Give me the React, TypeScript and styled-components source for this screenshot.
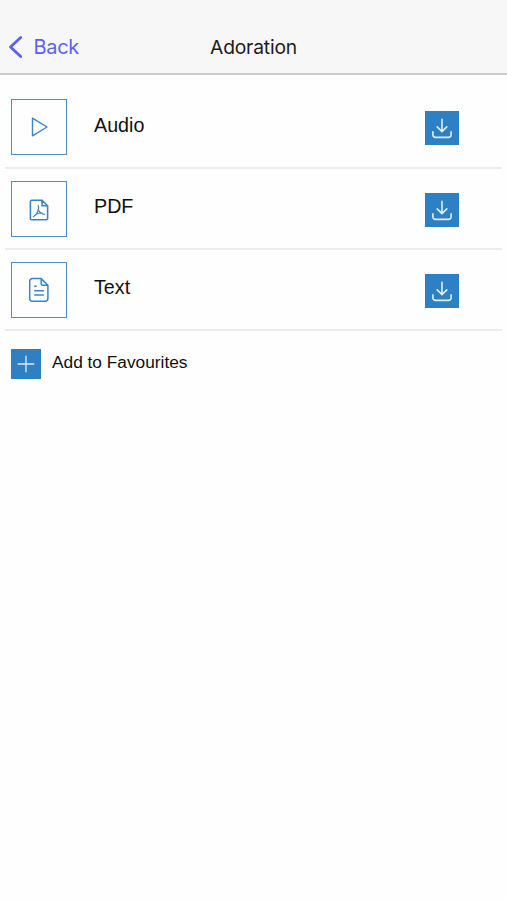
import React from "react";
import styled, { createGlobalStyle } from "styled-components";

const GlobalStyle = createGlobalStyle`
  * { box-sizing: border-box; }
  body { margin: 0; background: #fff; font-family: "Liberation Sans", Arial, sans-serif; color: #111; }
`;

const Screen = styled.div`
  min-height: 900px;
  background: #fefefe;
`;

const Header = styled.header`
  display: grid;
  grid-template-columns: 1fr auto 1fr;
  align-items: center;
  height: 75px;
  padding: 19px 8px 0;
  background: #f7f7f7;
  border-bottom: 2px solid #cbcbcb;
  font-family: Inter, sans-serif;
`;

const BackButton = styled.button`
  display: flex;
  align-items: center;
  gap: 11.5px;
  margin-top: 1px;
  padding: 0;
  border: 0;
  background: none;
  color: #5b62ee;
  font: 400 20px/24px Inter, sans-serif;
  letter-spacing: -0.3px;
`;

const Title = styled.h1`
  margin: 2px 0 0;
  font-size: 19.3px;
  line-height: 24px;
  font-weight: 400;
  letter-spacing: -0.2px;
  color: #1c1c1c;
`;

const List = styled.ul`
  list-style: none;
  margin: 0 5px;
  padding: 12.4px 0 0;
`;

const Row = styled.li`
  display: flex;
  align-items: center;
  height: 81.2px;
  padding: 0 43px 0 6px;
  border-bottom: 2px solid #ececee;
`;

const Tile = styled.div`
  display: grid;
  place-items: center;
  width: 56px;
  height: 56px;
  margin-top: 0.8px;
  border: 1px solid #4b8dcd;
  color: #3a85c6;
`;

const Label = styled.span`
  flex: 1;
  margin: -4px 0 0 27px;
  font-size: 19.7px;
  line-height: 24px;
`;

const ActionButton = styled.button<{ $size: number }>`
  display: grid;
  place-items: center;
  width: ${({ $size }) => $size}px;
  height: ${({ $size }) => $size}px;
  padding: 0;
  border: 0;
  background: #2f7fc3;
  color: #dcefff;
`;

const DownloadButton = styled(ActionButton)`
  margin-top: 3px;
`;

const Favourites = styled.div`
  display: flex;
  align-items: center;
  gap: 11px;
  padding: 17.6px 11px;
`;

const FavouritesLabel = styled.span`
  margin-top: -3px;
  font-size: 17.3px;
  line-height: 22px;
`;

const Glyph = styled.svg`
  display: block;
  fill: none;
  stroke: currentColor;
  stroke-linecap: round;
  stroke-linejoin: round;
`;

const ChevronIcon = () => (
  <Glyph width="14" height="24" viewBox="0 0 14 24" strokeWidth="2.8">
    <path d="M12.7 2.5 2.5 12l10.2 9.5" />
  </Glyph>
);

const PlayIcon = () => (
  <Glyph width="24" height="28" viewBox="0 0 24 28" strokeWidth="1.4">
    <path d="M5.5 5.2v17.6L20 14Z" />
  </Glyph>
);

const PdfIcon = () => (
  <Glyph width="24" height="28" viewBox="0 0 24 28" strokeWidth="1.6">
    <path d="M15 5.2H4.7a1.3 1.3 0 0 0-1.3 1.3v17a1.3 1.3 0 0 0 1.3 1.3h14.6a1.3 1.3 0 0 0 1.3-1.3V10.8L15 5.2v5.6h5.6" />
    <path strokeWidth="1.2" d="M11.3 10.500c.7 1.700.3 4.300-.6 6.200-1 2.200-2.500 4-4.400 5M11.400 15c1 2.400 3.200 4.100 6.200 4.400M8.800 19.500c2-1.200 4-1.600 6.300-1.500" />
  </Glyph>
);

const TextIcon = () => (
  <Glyph width="24" height="28" viewBox="0 0 24 28" strokeWidth="1.5">
    <path d="M14.2 2.6H5.4a2.700 2.700 0 0 0-2.700 2.700v17.200a2.700 2.700 0 0 0 2.700 2.700h12.800a2.700 2.700 0 0 0 2.700-2.700V9.300L14.200 2.600v5.200a1.500 1.500 0 0 0 1.500 1.500h5.200M7.800 10.300h1.400M7.800 14.700h8.600M7.800 19h8.600" />
  </Glyph>
);

const DownloadIcon = () => (
  <Glyph width="24" height="24" viewBox="0 0 24 24" strokeWidth="1.6">
    <path d="M12 3.400v12M7.200 10.900l4.800 4.700 4.800-4.700M2.900 15.700v3.200a2.500 2.500 0 0 0 2.500 2.500h13.200a2.500 2.500 0 0 0 2.500-2.500v-3.200" />
  </Glyph>
);

const PlusIcon = () => (
  <Glyph width="20" height="20" viewBox="0 0 20 20" strokeWidth="1.300">
    <path d="M10 2.200v15.600M2.200 10h15.600" />
  </Glyph>
);

const items = [
  { label: "Audio", Icon: PlayIcon },
  { label: "PDF", Icon: PdfIcon },
  { label: "Text", Icon: TextIcon },
];

export default function App() {
  return (
    <>
      <GlobalStyle />
      <Screen>
        <Header>
          <BackButton><ChevronIcon />Back</BackButton>
          <Title>Adoration</Title>
        </Header>
        <List>
          {items.map(({ label, Icon }) => (
            <Row key={label}>
              <Tile><Icon /></Tile>
              <Label>{label}</Label>
              <DownloadButton $size={34} aria-label={`Download ${label}`}><DownloadIcon /></DownloadButton>
            </Row>
          ))}
        </List>
        <Favourites>
          <ActionButton $size={30} aria-label="Add to favourites"><PlusIcon /></ActionButton>
          <FavouritesLabel>Add to Favourites</FavouritesLabel>
        </Favourites>
      </Screen>
    </>
  );
}
